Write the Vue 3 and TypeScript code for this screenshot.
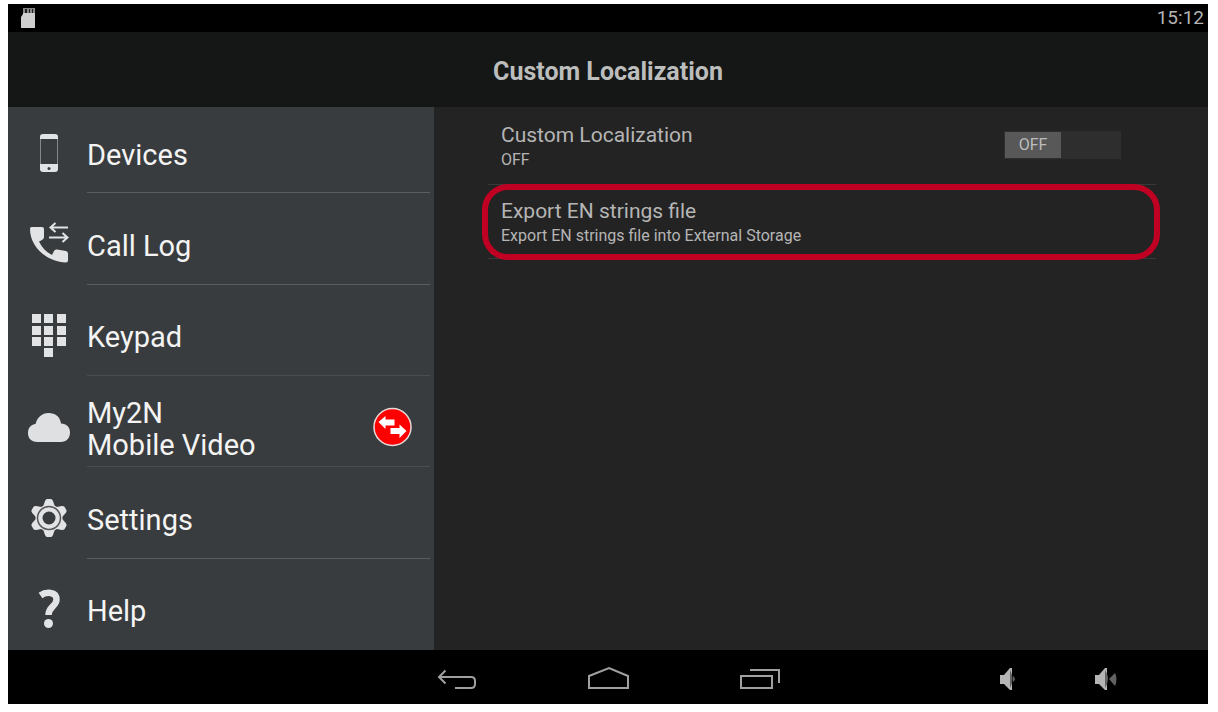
<script setup lang="ts">
import { ref } from 'vue'

interface MenuItem {
  id: string
  lines: string[]
  badge?: boolean
}

const menu: MenuItem[] = [
  { id: 'devices', lines: ['Devices'] },
  { id: 'calls', lines: ['Call Log'] },
  { id: 'keypad', lines: ['Keypad'] },
  { id: 'cloud', lines: ['My2N', 'Mobile Video'], badge: true },
  { id: 'settings', lines: ['Settings'] },
  { id: 'help', lines: ['Help'] },
]

const keypadKeys = [
  [4, 3], [16, 3], [29, 3],
  [4, 15], [16, 15], [29, 15],
  [4, 26], [16, 26], [29, 26],
  [16, 37],
]

const gearTeeth = [0, 60, 120, 180, 240, 300]

const localization = ref(false)
</script>

<template>
  <div class="screen">
    <div class="device">
      <div class="status">
        <svg class="sd" width="14" height="20" viewBox="0 0 14 20" aria-hidden="true">
          <path d="M3 0h11v20H0V9l2-3V0z" fill="#cfcfcf" />
          <path d="M4 1h2v4H4zM8 1h1v4H8zM11 1h1v4h-1z" fill="#333" />
          <path d="M2 0h12v5H2z" fill="#000" opacity=".35" />
        </svg>
        <time class="clock">15:12</time>
      </div>

      <header class="title-bar">
        <h1>Custom Localization</h1>
      </header>

      <main class="body">
        <nav class="side">
          <ul class="menu">
            <li v-for="item in menu" :key="item.id">
              <a href="#" class="item" :class="{ faint: item.id === 'keypad' || item.id === 'cloud' }" @click.prevent>
                <svg class="icon" width="44" height="48" viewBox="0 0 44 48" aria-hidden="true">
                  <g v-if="item.id === 'devices'">
                    <rect x="13.5" y="7" width="17" height="33" fill="none" stroke="#85888a" stroke-width="1" />
                    <path d="M13 10V8q0-3 3-3h12q3 0 3 3v2z" fill="#e2e3e4" />
                    <path d="M13 35h18v5q0 3-3 3H16q-3 0-3-3z" fill="#e2e3e4" />
                    <circle cx="22" cy="39.500" r="1.500" fill="#393c3e" />
                  </g>
                  <g v-else-if="item.id === 'calls'">
                    <path
                      d="M4.500 7H15q2 0 2 2v8q0 2-2 3l-3 1.500c3 6 7 10.500 13 13.500l2-4q1-2 3-1.500l9 1.500q2 .5 2 2.500v7q0 2-2 2C20 42 3 27 3 9q0-2 1.500-2z"
                      fill="#e2e3e4"
                    />
                    <path
                      d="M41 7.500H23.500M28.500 3L23.500 7.500l5 4.500M22 17.500h18.500M35.500 13l5 4.500-5 4.500"
                      fill="none"
                      stroke="#e2e3e4"
                      stroke-width="2"
                    />
                  </g>
                  <g v-else-if="item.id === 'keypad'" fill="#e2e3e4">
                    <rect v-for="(key, i) in keypadKeys" :key="i" :x="key[0] + 1" :y="key[1]" width="9" height="9" />
                  </g>
                  <g v-else-if="item.id === 'cloud'" fill="#dfe0e1">
                    <path
                      d="M10 39C4.500 39 1 35.500 1 30c0-5 3-8.500 7.500-9C10.500 14 15 10 21.500 10c7 0 11.500 3.500 12.500 10.500 5.500 0 9 3.500 9 9S39.500 39 34 39z"
                    />
                  </g>
                  <g v-else-if="item.id === 'settings'">
                    <g fill="#e2e3e4">
                      <path
                        v-for="angle in gearTeeth"
                        :key="angle"
                        d="M16 13l2-6q1-2 2-2h4q1 0 2 2l2 6z"
                        :transform="`rotate(${angle} 22 24)`"
                      />
                      <circle cx="22" cy="24" r="13.500" />
                    </g>
                    <circle cx="22" cy="24" r="11.500" fill="none" stroke="#55585a" stroke-width="1.500" />
                    <circle cx="22" cy="24" r="6.500" fill="#393c3e" />
                  </g>
                  <g v-else>
                    <path
                      d="M13.500 10.500C19 6.500 29.500 6.500 29.500 14.500c0 7-8 7-8 15.500"
                      fill="none"
                      stroke="#e2e3e4"
                      stroke-width="6.500"
                    />
                    <circle cx="21.500" cy="38.500" r="4.500" fill="#e2e3e4" />
                  </g>
                </svg>
                <span class="label">
                  <span v-for="line in item.lines" :key="line">{{ line }}</span>
                </span>
                <svg
                  v-if="item.badge"
                  class="badge"
                  width="40"
                  height="40"
                  viewBox="0 0 40 40"
                  role="img"
                  aria-label="Connection"
                >
                  <circle cx="20.500" cy="20" r="18.500" fill="#fe0000" stroke="#e9dada" stroke-width="1.500" />
                  <path d="M6.500 15l7-6v3.500h9v6h-9V22z" fill="#fff" />
                  <path d="M34.500 24l-7-6.500V21h-9v6h9v4z" fill="#fff" />
                </svg>
              </a>
            </li>
          </ul>
        </nav>

        <section class="prefs">
          <div class="pref">
            <label class="pref-text" for="custom-localization">
              <span class="name">Custom Localization</span>
              <span class="note">{{ localization ? 'ON' : 'OFF' }}</span>
            </label>
            <span class="switch" :class="{ on: localization }">
              <input id="custom-localization" v-model="localization" type="checkbox" role="switch" />
              <span class="thumb" aria-hidden="true">{{ localization ? 'ON' : 'OFF' }}</span>
            </span>
          </div>
          <button type="button" class="pref marked">
            <span class="pref-text">
              <span class="name">Export EN strings file</span>
              <span class="note">Export EN strings file into External Storage</span>
            </span>
          </button>
        </section>
      </main>

      <footer class="nav-bar">
        <div class="keys">
          <button type="button" aria-label="Back">
            <svg width="44" height="28" viewBox="0 0 44 28">
              <path d="M21 23h16q4 0 4-4v-3q0-4-4-4H5M11.500 5.500L5 12l6.500 6.500" />
            </svg>
          </button>
          <button type="button" aria-label="Home">
            <svg width="44" height="28" viewBox="0 0 44 28">
              <path d="M3 23V11l20-8 19 8v12z" />
            </svg>
          </button>
          <button type="button" aria-label="Recent apps">
            <svg width="44" height="28" viewBox="0 0 44 28">
              <path d="M3 11h31v12H3zM12 5h29v13" />
            </svg>
          </button>
        </div>
        <div class="volume">
          <button type="button" aria-label="Volume down">
            <svg width="24" height="24" viewBox="0 0 24 24">
              <path class="solid" d="M2 8h4l6-7h2v22h-2l-6-6H2z" />
              <path class="dim" d="M12 3q5 9 0 18z" />
              <path class="dim" d="M15 9q4 3 0 6z" />
            </svg>
          </button>
          <button type="button" aria-label="Volume up">
            <svg width="24" height="24" viewBox="0 0 24 24">
              <path class="solid" d="M1 8h4l6-7h2v22h-2l-6-6H1z" />
              <path class="dim" d="M11 3q6 9 0 18z" />
              <path class="dim" d="M15 12l6-6q3 6 0 13z" />
            </svg>
          </button>
        </div>
      </footer>
    </div>
  </div>
</template>

<style>
body {
  margin: 0;
  background: #fff;
}
</style>

<style scoped>
.screen {
  box-sizing: border-box;
  display: flex;
  min-height: 100vh;
  padding: 4px 10px 8px 8px;
  font-family: Roboto, 'Noto Sans', sans-serif;
}

.device {
  display: flex;
  flex: 1;
  flex-direction: column;
  background: #000;
}

button {
  margin: 0;
  padding: 0;
  border: 0;
  background: none;
  color: inherit;
  font: inherit;
  text-align: left;
  cursor: pointer;
}

.status {
  display: flex;
  align-items: center;
  justify-content: space-between;
  height: 28px;
  padding: 0 4px 0 13px;
  color: #b4b4b4;
}

.clock {
  font-size: 19px;
  line-height: 28px;
}

.title-bar {
  box-sizing: border-box;
  display: flex;
  align-items: center;
  justify-content: center;
  height: 75px;
  padding-top: 4px;
  background: #151716;
}

h1 {
  margin: 0;
  color: #bcbebd;
  font-size: 25px;
  font-weight: 700;
  line-height: 32px;
}

.body {
  display: flex;
  flex: 1;
}

.side {
  display: flex;
  flex: 0 0 426px;
  overflow: hidden;
  background: #393c3e;
}

.menu {
  display: grid;
  flex: 1;
  grid-auto-rows: 1fr;
  margin: -5px 0 0;
  padding: 0;
  list-style: none;
}

.menu li {
  display: flex;
}

.item {
  position: relative;
  display: flex;
  flex: 1;
  align-items: center;
  padding: 10px 22px 0 19px;
  color: #f4f4f4;
  text-decoration: none;
}

.menu li:not(:last-child) .item::after {
  position: absolute;
  right: 4px;
  bottom: 0;
  left: 79px;
  height: 1px;
  background: #5b5d5f;
  content: '';
}

.menu li .item.faint::after {
  background: #4a4d4f;
}

.icon {
  flex: none;
}

.label {
  display: flex;
  flex: 1;
  flex-direction: column;
  padding: 4px 0 0 16px;
  font-size: 29px;
  line-height: 32px;
}

.badge {
  flex: none;
}

.prefs {
  display: flex;
  flex: 1;
  flex-direction: column;
  padding: 2px 52px 0 54px;
  background: #232323;
}

.pref {
  position: relative;
  display: flex;
  align-items: flex-start;
  justify-content: space-between;
  box-sizing: border-box;
  height: 76px;
  padding: 13px 35px 0 13px;
  border-bottom: 1px solid #393939;
  color: #b5b5b5;
}

.pref.marked {
  height: 74px;
}

.marked::after {
  position: absolute;
  inset: -1px -4px -2px -6px;
  border: 6px solid #c00023;
  border-radius: 26px;
  content: '';
}

.pref-text {
  display: flex;
  flex-direction: column;
}

.name {
  font-size: 21px;
  line-height: 26px;
}

.note {
  font-size: 16px;
  line-height: 24px;
}

.switch {
  position: relative;
  display: flex;
  width: 115px;
  margin-top: 9px;
  padding: 1px;
  background: #2e2e2e;
}

.switch.on {
  justify-content: flex-end;
}

.switch input {
  position: absolute;
  inset: 0;
  width: 100%;
  height: 100%;
  margin: 0;
  opacity: 0;
  cursor: pointer;
}

.thumb {
  width: 56px;
  background: #585858;
  color: #bdbdbd;
  font-size: 16px;
  line-height: 26px;
  text-align: center;
}

.nav-bar {
  box-sizing: border-box;
  display: grid;
  grid-template-columns: 1fr auto 1fr;
  align-items: center;
  height: 54px;
  padding-top: 4px;
}

.keys {
  display: flex;
  grid-column: 2;
  gap: 108px;
}

.volume {
  display: flex;
  justify-content: flex-end;
  gap: 72px;
  padding-right: 90px;
}

.nav-bar button,
.nav-bar svg {
  display: block;
}

.nav-bar path {
  fill: none;
  stroke: #a0a0a0;
  stroke-width: 2;
}

.nav-bar .solid {
  fill: #b5b5b5;
  stroke: none;
}

.nav-bar .dim {
  fill: #626262;
  stroke: none;
}
</style>
